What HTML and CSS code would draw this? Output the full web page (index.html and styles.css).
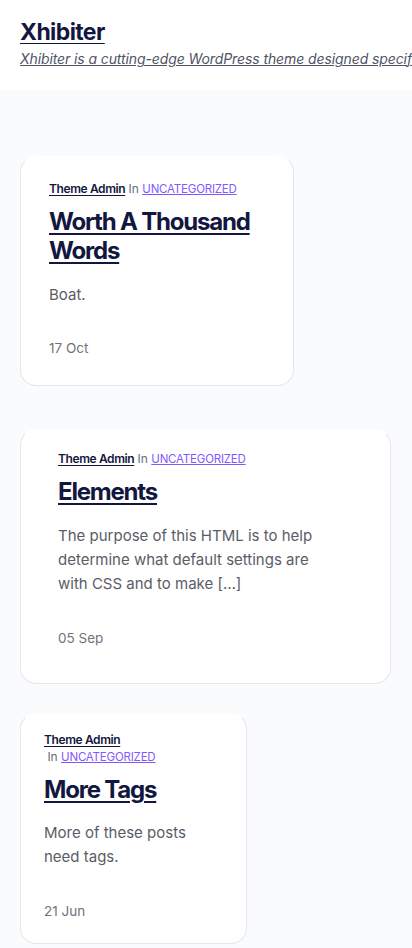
FILE: index.html
```html
<!DOCTYPE html>
<html lang="en">
<head>
<meta charset="utf-8">
<meta name="viewport" content="width=device-width, initial-scale=1">
<title>Xhibiter</title>
<link rel="stylesheet" href="styles.css">
</head>
<body>
<header class="site-header">
  <a class="site-title" href="#">Xhibiter</a>
  <a class="site-tagline" href="#">Xhibiter is a cutting-edge WordPress theme designed specifically for NFT marketplaces</a>
</header>
<main class="posts">
  <article class="card card-1">
    <div class="meta"><a class="author" href="#">Theme Admin</a> <span class="in">In</span> <a class="cat" href="#">UNCATEGORIZED</a></div>
    <h2 class="post-title"><a href="#">Worth A Thousand Words</a></h2>
    <p class="excerpt">Boat.</p>
    <div class="date">17 Oct</div>
  </article>
  <article class="card card-2">
    <div class="meta"><a class="author" href="#">Theme Admin</a> <span class="in">In</span> <a class="cat" href="#">UNCATEGORIZED</a></div>
    <h2 class="post-title"><a href="#">Elements</a></h2>
    <p class="excerpt">The purpose of this HTML is to help determine what default settings are with CSS and to make […]</p>
    <div class="date">05 Sep</div>
  </article>
  <article class="card card-3">
    <div class="meta meta-stack"><a class="author" href="#">Theme Admin</a><div class="meta-line">&nbsp;<span class="in">In</span> <a class="cat" href="#">UNCATEGORIZED</a></div></div>
    <h2 class="post-title"><a href="#">More Tags</a></h2>
    <p class="excerpt">More of these posts need tags.</p>
    <div class="date">21 Jun</div>
  </article>
</main>
</body>
</html>
```
FILE: styles.css
```css
* { box-sizing: border-box; }
html, body { margin: 0; padding: 0; }
body {
  background: #ffffff;
  font-family: "Inter", "Liberation Sans", sans-serif;
  color: #131740;
  overflow: hidden;
  width: 412px;
}
.site-header {
  padding: 17px 20px 19px;
  display: flex;
  flex-direction: column;
  white-space: nowrap;
  overflow: hidden;
}
.site-title {
  font-size: 23px;
  font-weight: 700;
  color: #131740;
  text-decoration: underline;
  text-underline-offset: 3px;
  text-decoration-thickness: 1px;
  letter-spacing: -0.6px;
  line-height: 30px;
  align-self: flex-start;
}
.site-tagline {
  font-size: 14px;
  font-style: italic;
  color: #4f5466;
  text-decoration: underline;
  text-decoration-thickness: 1px;
  line-height: 22px;
  margin-top: 1px;
  letter-spacing: -0.1px;
}
.posts {
  background: #fafbfd;
  padding: 67px 0 40px;
  min-height: 860px;
  display: flex;
  flex-direction: column;
  align-items: flex-start;
}
.card {
  margin-left: 20px;
  background: #ffffff;
  border-radius: 16px;
  border: 1px solid #e6e7ec;
  border-top-color: transparent;
  display: flex;
  flex-direction: column;
}
.card-1 { width: 274px; padding: 24px 28px 27px; }
.card-2 { width: 371px; padding: 21px 60px 35px 37px; margin-top: 43px; }
.card-3 { width: 227px; padding: 17px 23px 22px; margin-top: 29px; }
.meta {
  font-size: 12px;
  line-height: 16px;
  color: #6b6f7b;
}
.author {
  color: #131740;
  font-weight: 600;
  letter-spacing: -0.4px;
  text-decoration: underline;
  text-underline-offset: 2px;
}
.in { color: #676b77; }
.cat {
  color: #8358ff;
  font-size: 11.5px;
  text-decoration: underline;
  letter-spacing: -0.2px;
}
.meta-stack { display: flex; flex-direction: column; line-height: 17px; }
.post-title {
  margin: 10px 0 0;
  font-size: 24px;
  line-height: 29px;
  font-weight: 700;
  letter-spacing: -1.2px;
}
.card-3 .post-title { margin-top: 9px; }
.post-title a {
  color: #131740;
  text-decoration: underline;
  text-decoration-thickness: 2px;
  text-underline-offset: 3px;
}
.excerpt {
  margin: 18px 0 0;
  font-size: 15px;
  line-height: 24px;
  color: #5a5d66;
}
.card-2 .excerpt { margin-top: 18px; }
.card-3 .excerpt { margin-top: 17px; }
.date {
  margin-top: 31px;
  font-size: 13.5px;
  line-height: 20px;
  color: #70737c;
}
.card-2 .date { margin-top: 32px; }
.card-3 .date { margin-top: 32px; }
```
